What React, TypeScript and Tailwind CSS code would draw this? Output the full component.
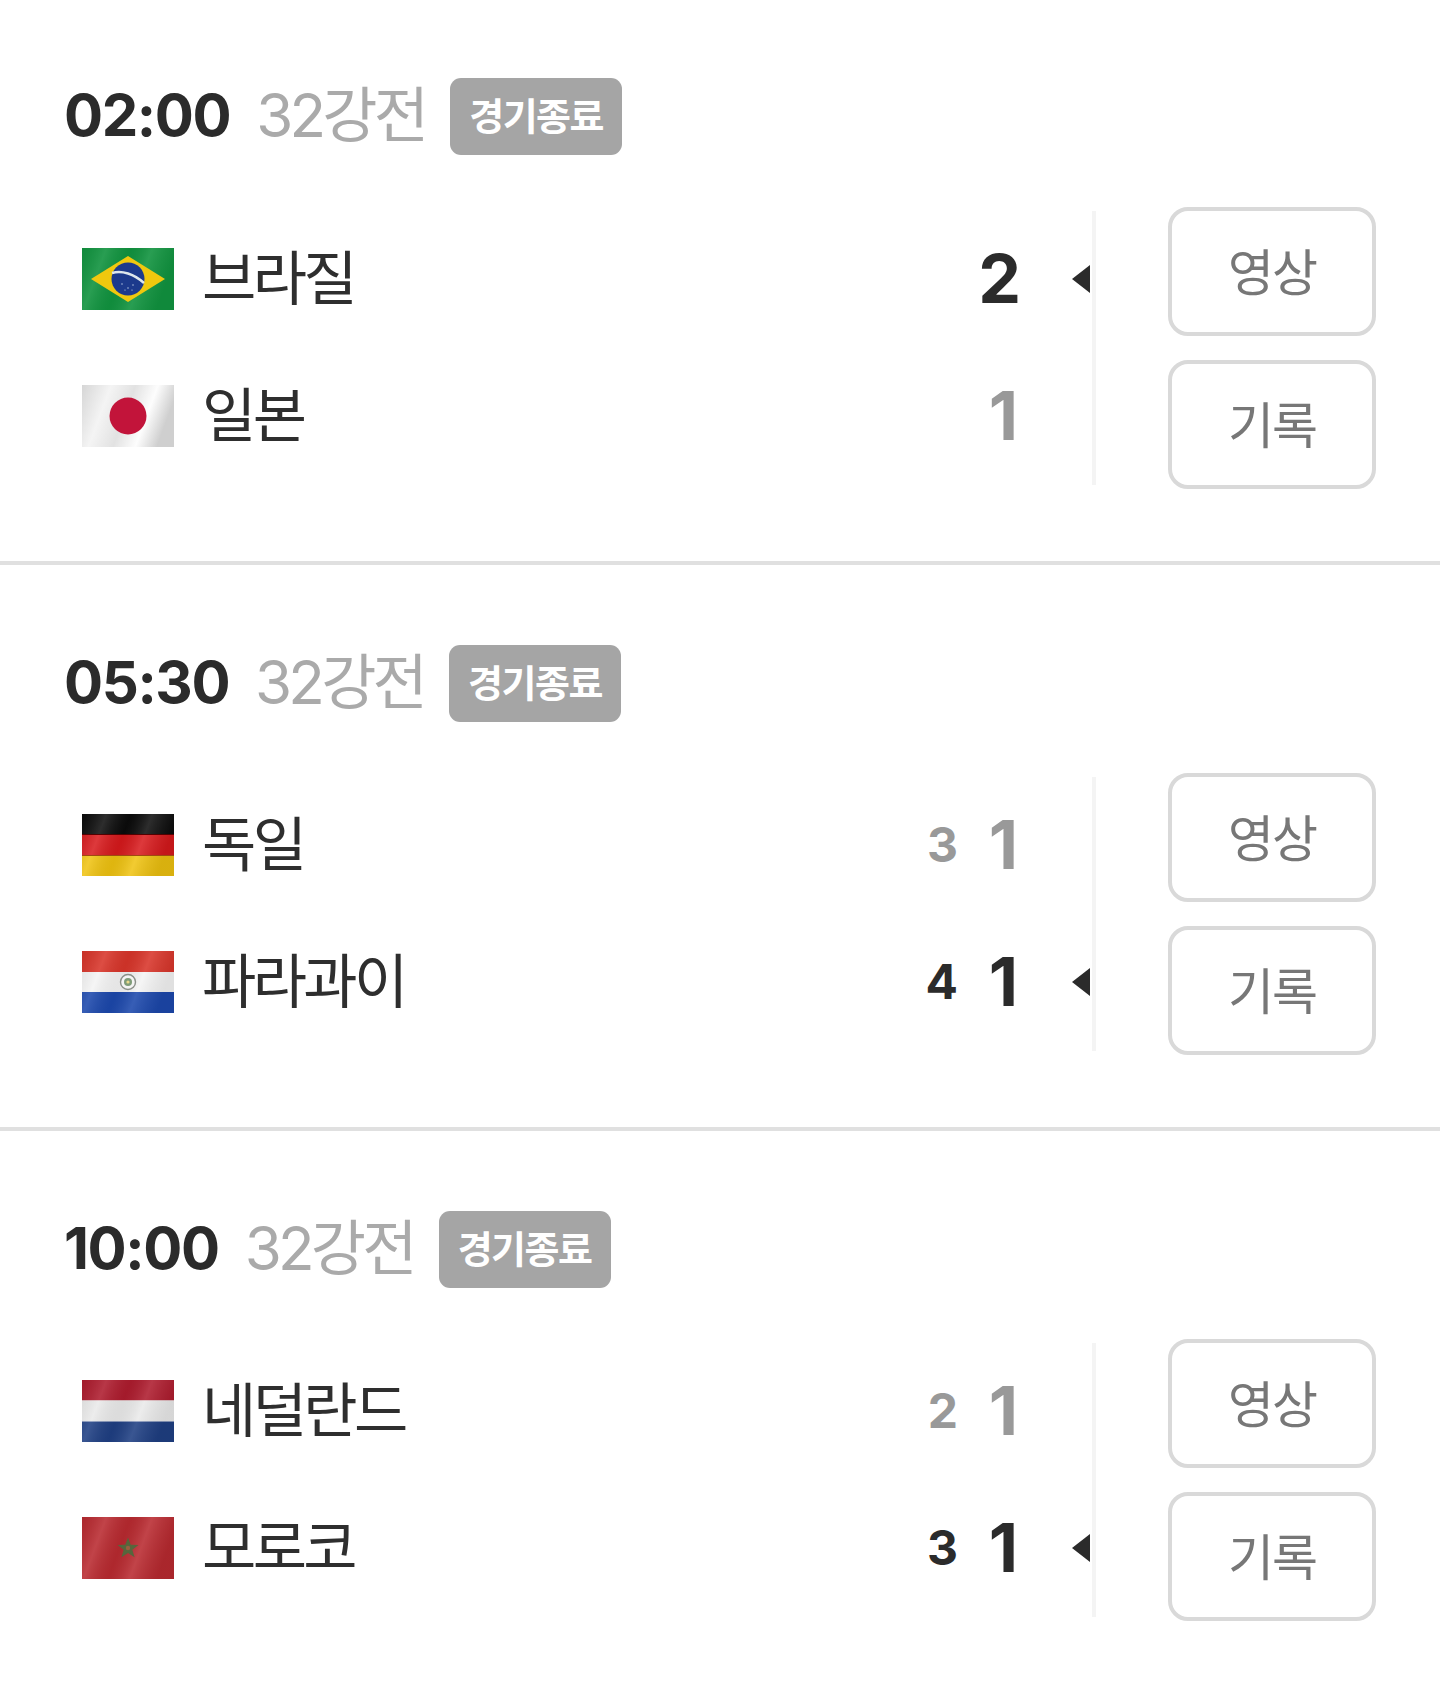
import React from "react";

const KR = "font-['Inter','Noto_Sans_CJK_KR',sans-serif]";

function Sheen({ id, strength = 0.22 }: { id: string; strength?: number }) {
  return (
    <>
      <defs>
        <linearGradient id={id} x1="0" y1="0" x2="1" y2="0.25">
          <stop offset="0" stopColor="#000" stopOpacity={strength * 0.6} />
          <stop offset="0.25" stopColor="#fff" stopOpacity={strength} />
          <stop offset="0.5" stopColor="#000" stopOpacity={strength * 0.5} />
          <stop offset="0.72" stopColor="#fff" stopOpacity={strength} />
          <stop offset="1" stopColor="#000" stopOpacity={strength * 0.7} />
        </linearGradient>
      </defs>
      <rect x="0" y="0" width="92" height="62" fill={`url(#${id})`} />
    </>
  );
}

function Flag({ code }: { code: string }) {
  return (
    <svg viewBox="0 0 92 62" className="w-[92px] h-[62px] shrink-0 block blur-[0.5px]">
      {code === "br" && (
        <>
          <rect width="92" height="62" fill="#11933f" />
          <Sheen id="s-br" strength={0.1} />
          <polygon points="46,8 83,31 46,54 9,31" fill="#f0c80e" />
          <circle cx="46" cy="31" r="16.5" fill="#1c3a8c" />
          <path d="M30 25 C 40 22, 52 26, 62 35" stroke="#dde7ec" strokeWidth="2.4" fill="none" />
          <g fill="#c8d4ea">
            <circle cx="40" cy="36" r="0.7" />
            <circle cx="46" cy="40" r="0.7" />
            <circle cx="51" cy="37" r="0.7" />
            <circle cx="43" cy="42" r="0.6" />
            <circle cx="50" cy="42" r="0.6" />
          </g>
        </>
      )}
      {code === "jp" && (
        <>
          <defs>
            <linearGradient id="jp-bg" x1="0" y1="0" x2="1" y2="0.25">
              <stop offset="0" stopColor="#d6d6d6" />
              <stop offset="0.3" stopColor="#f4f4f4" />
              <stop offset="0.55" stopColor="#e2e2e2" />
              <stop offset="0.78" stopColor="#fdfdfd" />
              <stop offset="1" stopColor="#cfcfcf" />
            </linearGradient>
          </defs>
          <rect width="92" height="62" fill="url(#jp-bg)" />
          <circle cx="46" cy="31" r="18.5" fill="#c2143a" />
        </>
      )}
      {code === "de" && (
        <>
          <rect width="92" height="20.5" fill="#0b0b0b" />
          <rect y="20.5" width="92" height="21" fill="#d8191c" />
          <rect y="41.5" width="92" height="20.5" fill="#f0c310" />
          <Sheen id="s-de" strength={0.14} />
          <rect y="20" width="92" height="1" fill="#500" />
          <rect y="41" width="92" height="1" fill="#a04a10" />
        </>
      )}
      {code === "py" && (
        <>
          <rect width="92" height="21" fill="#d8352a" />
          <rect y="21" width="92" height="20" fill="#f4f4f4" />
          <rect y="41" width="92" height="21" fill="#1c48ac" />
          <Sheen id="s-py" strength={0.12} />
          <circle cx="46" cy="31" r="7.5" fill="#f4f4f4" stroke="#8a8f88" strokeWidth="1.4" />
          <circle cx="46" cy="31" r="4" fill="#7f9c78" />
          <circle cx="46" cy="31" r="1.6" fill="#e8d98a" />
        </>
      )}
      {code === "nl" && (
        <>
          <rect width="92" height="20.5" fill="#ae1c2e" />
          <rect y="20.5" width="92" height="21" fill="#eaeaea" />
          <rect y="41.5" width="92" height="20.5" fill="#1f3f83" />
          <Sheen id="s-nl" strength={0.12} />
        </>
      )}
      {code === "ma" && (
        <>
          <rect width="92" height="62" fill="#b92a30" />
          <Sheen id="s-ma" strength={0.12} />
          <polygon
            points="46,20.5 48.7,27.8 56.5,28 50.3,32.8 52.6,40.3 46,35.9 39.4,40.3 41.7,32.8 35.5,28 43.3,27.8"
            fill="#56663c"
          />
          <circle cx="46" cy="31" r="2.2" fill="#96603f" />
        </>
      )}
    </svg>
  );
}

type Team = { flag: string; name: string; score: string; pk?: string; win?: boolean };
type Match = { time: string; teams: [Team, Team] };

const matches: Match[] = [
  {
    time: "02:00",
    teams: [
      { flag: "br", name: "브라질", score: "2", win: true },
      { flag: "jp", name: "일본", score: "1" },
    ],
  },
  {
    time: "05:30",
    teams: [
      { flag: "de", name: "독일", score: "1", pk: "3" },
      { flag: "py", name: "파라과이", score: "1", pk: "4", win: true },
    ],
  },
  {
    time: "10:00",
    teams: [
      { flag: "nl", name: "네덜란드", score: "1", pk: "2" },
      { flag: "ma", name: "모로코", score: "1", pk: "3", win: true },
    ],
  },
];

function Row({ team }: { team: Team }) {
  const color = team.win ? "text-[#2b2b2b]" : "text-[#999999]";
  return (
    <div className="h-[137px] flex items-center pl-[18px] pr-[2px] pb-[2px]">
      <Flag code={team.flag} />
      <span className="ml-[28px] pb-[1px] text-[59px] leading-none tracking-[-3.6px] text-[#2e2e2e]">{team.name}</span>
      <div className="ml-auto flex items-center">
        {team.pk && <span className={`text-[48px] leading-none font-bold ${color}`}>{team.pk}</span>}
        <span className={`w-[60px] pb-[2px] text-right text-[68px] leading-none font-bold ${color} ${team.score === "2" ? "relative left-[3px]" : ""}`}>{team.score}</span>
        <span className="w-[72px] flex justify-end">
          {team.win && (
            <svg viewBox="0 0 18 28" className="w-[18px] h-[28px] block">
              <polygon points="18,0 18,28 0,14" fill="#2b2b2b" />
            </svg>
          )}
        </span>
      </div>
    </div>
  );
}

function ActionButton({ label }: { label: string }) {
  return (
    <button className="h-[129px] w-[208px] pt-[3px] rounded-[20px] border-[4px] border-[#d9d9d9] bg-white text-[50px] leading-none tracking-[-2px] text-[#777777]">
      {label}
    </button>
  );
}

function MatchCard({ match, index }: { match: Match; index: number }) {
  const pad = index === 0 ? "pt-[78px] pb-[72px] border-b-[4px]" : index === 1 ? "pt-[80px] pb-[72px] border-b-[4px]" : "pt-[80px] pb-[72px]";
  return (
    <section className={`pl-[64px] pr-[64px] border-[#e0e0e0] ${pad}`}>
      <div className="flex items-center h-[77px]">
        <span className="pb-[3px] text-[58px] leading-none font-bold tracking-[-1.4px] text-[#2b2b2b]">{match.time}</span>
        <span className="ml-[26px] pb-[3px] text-[60px] leading-none font-normal tracking-[-3.8px] text-[#aaaaaa]">32강전</span>
        <span className="ml-[25px] h-[77px] w-[172px] rounded-[11px] bg-[#a5a5a5] flex items-center justify-center pb-[2px] text-[38px] leading-none font-bold tracking-[-1.5px] text-white">
          경기종료
        </span>
      </div>
      <div className={`flex ${index === 0 ? "mt-[52px]" : "mt-[51px]"}`}>
        <div className="w-[1032px] my-[4px] border-r-[4px] border-[#f4f4f4]">
          <Row team={match.teams[0]} />
          <Row team={match.teams[1]} />
        </div>
        <div className="ml-[72px] flex flex-col gap-[24px]">
          <ActionButton label="영상" />
          <ActionButton label="기록" />
        </div>
      </div>
    </section>
  );
}

export default function App() {
  return (
    <div className={`w-[1440px] min-h-[1682px] bg-white ${KR}`}>
      {matches.map((m, i) => (
        <MatchCard key={m.time} match={m} index={i} />
      ))}
    </div>
  );
}
